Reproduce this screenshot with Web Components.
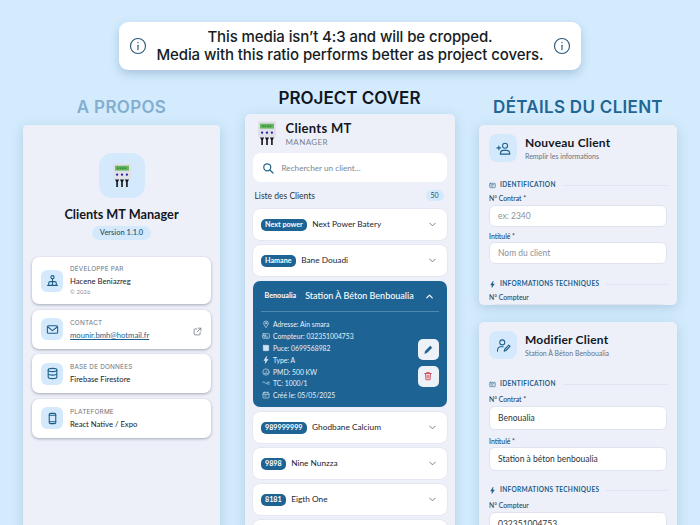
<!DOCTYPE html>
<html lang="fr">
<head>
<meta charset="utf-8">
<title>Clients MT Manager</title>
<style>
  html, body { margin: 0; padding: 0; }
  body { width: 700px; height: 525px; overflow: hidden; background: #d3ebfd; font-family: "Lato", "Liberation Sans", sans-serif; color: #15202b; font-variant-numeric: oldstyle-nums; }
</style>
</head>
<body>
<x-page>
  <x-banner slot="banner">This media isn’t 4:3 and will be cropped.<br>Media with this ratio performs better as project covers.</x-banner>

  <x-column slot="left" heading="A PROPOS" tone="#82aed0" offset="37" spacing=".3">
    <x-about-panel>
      <x-info-row icon="user" label="Développé par" value="Hacene Beniazreg" note="© 2026" h="47"></x-info-row>
      <x-info-row icon="mail" label="Contact" value="mounir.bmh@hotmail.fr" link h="39"></x-info-row>
      <x-info-row icon="db" label="Base de données" value="Firebase Firestore" h="39"></x-info-row>
      <x-info-row icon="phone" label="Plateforme" value="React Native / Expo" h="39"></x-info-row>
    </x-about-panel>
  </x-column>

  <x-column slot="center" heading="PROJECT COVER" tone="#10161f" offset="28" spacing="0">
    <x-client-list>
      <x-client-row code="Next power" name="Next Power Batery"></x-client-row>
      <x-client-row code="Hamane" name="Bane Douadi"></x-client-row>
      <x-client-open code="Benoualia" name="Station À Béton Benboualia"></x-client-open>
      <x-client-row code="989999999" name="Ghodbane Calcium"></x-client-row>
      <x-client-row code="9898" name="Nine Nunzza"></x-client-row>
      <x-client-row code="8181" name="Eigth One"></x-client-row>
      <x-client-row></x-client-row>
    </x-client-list>
  </x-column>

  <x-column slot="right" heading="DÉTAILS DU CLIENT" tone="#1f6694" offset="37" spacing=".3">
    <x-form-card icon="add" title="Nouveau Client" sub="Remplir les informations" h="180">
      <x-section-title icon="card" text="IDENTIFICATION"></x-section-title>
      <x-field label="N° Contrat *" placeholder="ex: 2340" h="22" top="4"></x-field>
      <x-field label="Intitulé *" placeholder="Nom du client" h="22" top="4"></x-field>
      <x-section-title icon="bolt" text="INFORMATIONS TECHNIQUES" top="15"></x-section-title>
      <x-field label="N° Compteur" h="22" top="4"></x-field>
    </x-form-card>
    <x-form-card icon="edit" title="Modifier Client" sub="Station À Béton Benboualia" h="230" gap="17" looser>
      <x-section-title icon="card" text="IDENTIFICATION"></x-section-title>
      <x-field label="N° Contrat *" value="Benoualia" h="24" top="6"></x-field>
      <x-field label="Intitulé *" value="Station à béton benboualia" h="24" top="7"></x-field>
      <x-section-title icon="bolt" text="INFORMATIONS TECHNIQUES" top="14"></x-section-title>
      <x-field label="N° Compteur" value="032351004753" h="24" top="6"></x-field>
    </x-form-card>
  </x-column>
</x-page>

<script>
// icon paths, all on a 24x24 box
const ICONS = {
  info: '<circle cx="12" cy="12" r="10"/><path d="M12 11v6"/><path d="M12 7.2v.3"/>',
  user: '<circle cx="12" cy="6" r="3"/><path d="M12 9v5M5 21v-4a3 3 0 0 1 3-3h8a3 3 0 0 1 3 3v4M3 21h18M12 14v7"/>',
  mail: '<rect x="2.5" y="5" width="19" height="14" rx="2"/><path d="M3 7l9 7 9-7"/>',
  db: '<ellipse cx="12" cy="5.5" rx="8" ry="3"/><path d="M4 5.5v13c0 1.7 3.6 3 8 3s8-1.300 8-3v-13M4 12c0 1.700 3.600 3 8 3s8-1.300 8-3"/>',
  phone: '<rect x="6" y="2.500" width="12" height="19" rx="2"/><path d="M6 6h12M6 18h12"/>',
  ext: '<path d="M19 14v5a2 2 0 0 1-2 2H5a2 2 0 0 1-2-2V7a2 2 0 0 1 2-2h5"/><path d="M14 3h7v7M21 3l-10 10"/>',
  search: '<circle cx="10.500" cy="10.500" r="7"/><path d="M16 16l6 6"/>',
  down: '<path d="M6 9l6 6 6-6"/>',
  up: '<path d="M6 15l6-6 6 6"/>',
  pin: '<path d="M12 22s7-6.500 7-12a7 7 0 0 0-14 0c0 5.500 7 12 7 12z"/><circle cx="12" cy="10" r="2.500"/>',
  meter: '<rect x="2" y="5" width="20" height="14" rx="2"/><path d="M6 9h6v3H6zM6 15h12"/>',
  chip: '<rect x="4" y="4" width="16" height="16" rx="1" fill="currentColor"/>',
  bolt: '<path d="M13.500 2L6 13.500h5L10 22l8-12h-5.500z" fill="currentColor"/>',
  gauge: '<circle cx="12" cy="12" r="9.500"/><path d="M12 12l3-4M7 16h10"/>',
  wave: '<path d="M2 11c2-4 5-4 7 0s5 4 6 1M16 10h6M16 15h6"/>',
  cal: '<rect x="3" y="5" width="18" height="16" rx="2"/><path d="M3 10h18M8 2.500V6M16 2.500V6M8 15h5"/>',
  pen: '<path d="M4 20l1-4.500L16 4.500l3.500 3.500L8.500 19z" fill="currentColor"/>',
  trash: '<path d="M4 6h16M9 6V3.500h6V6M6 6l1 15h10l1-15M10 10v7M14 10v7"/>',
  add: '<circle cx="14.500" cy="7.500" r="4"/><path d="M7 21v-1.500a5 5 0 0 1 5-4.500h5a5 5 0 0 1 5 4.500V21zM1.500 11h6M4.500 8v6"/>',
  edit: '<circle cx="10" cy="7" r="4"/><path d="M2.500 21v-2a5 5 0 0 1 5-5h4M13 21l1-3 6.500-6.500 2 2L16 20z"/>',
  card: '<rect x="2.500" y="4.500" width="19" height="15" rx="2"/><path d="M6.500 9.500h11M6.500 14h7"/>'
};

function icon(name, size, width) {
  return `<svg width="${size}" height="${size}" viewBox="0 0 24 24" fill="none" stroke="currentColor" stroke-width="${width || 2}" stroke-linecap="round" stroke-linejoin="round" aria-hidden="true">${ICONS[name]}</svg>`;
}

// base class: every element fills its own open shadow root once
class ShadowEl extends HTMLElement {
  constructor() {
    super();
    this.attachShadow({ mode: 'open' });
  }
  connectedCallback() {
    this.shadowRoot.innerHTML = this.render();
  }
  attr(name, fallback) {
    return this.hasAttribute(name) ? this.getAttribute(name) : fallback;
  }
}

class XPage extends ShadowEl {
  render() {
    return `<style>
      :host { display: block; width: 700px; height: 525px; overflow: hidden; }
      .top { display: flex; justify-content: center; padding-top: 22px; }
      .cols { display: grid; grid-template-columns: 197px 210px 198px; column-gap: 24.500px; padding-left: 23px; }
    </style>
    <div class="top"><slot name="banner"></slot></div>
    <div class="cols"><slot name="left"></slot><slot name="center"></slot><slot name="right"></slot></div>`;
  }
}

class XBanner extends ShadowEl {
  render() {
    return `<style>
      :host { display: flex; align-items: center; justify-content: space-between; box-sizing: border-box; width: 462px; height: 48px; padding: 0 10px; background: #fff; border-radius: 9px; box-shadow: 0 4px 10px rgba(60,100,140,.28); font-variant-numeric: lining-nums; }
      p { margin: 0; font: 500 15px/18px "Inter", sans-serif; letter-spacing: -.1px; color: #161c24; text-align: center; white-space: nowrap; }
      svg { color: #2a5878; display: block; flex: none; }
    </style>
    ${icon('info', 18, 1.5)}<p><slot></slot></p>${icon('info', 18, 1.5)}`;
  }
}

class XColumn extends ShadowEl {
  render() {
    return `<style>
      :host { display: block; min-width: 0; }
      h2 { margin: 0; height: 19px; font: 600 17px/19px "Inter", sans-serif; letter-spacing: ${this.attr('spacing', 0)}px; text-align: center; white-space: nowrap; color: ${this.attr('tone')}; }
      .body { display: flex; flex-direction: column; }
    </style>
    <h2 style="margin-top:${this.attr('offset')-9}px;margin-bottom:${this.attr('offset') === '28' ? 6 : 8}px">${this.attr('heading')}</h2>
    <div class="body"><slot></slot></div>`;
  }
}

// the little meter drawn as the app logo
class XMeterLogo extends ShadowEl {
  render() {
    return `<style>:host { display: block; line-height: 0; } svg { display: block; }</style>
    <svg width="${this.attr('w', 22)}" height="${this.attr('h', 30)}" viewBox="0 0 22 30">
      <rect x="0" y="0" width="22" height="20" rx="1.500" fill="#dfe0e8"/>
      <rect x="2.500" y="3" width="17" height="6" fill="#63b85c"/>
      <path d="M5 6h12" stroke="#2f7a35" stroke-width="1.500" stroke-dasharray="2 1"/>
      <circle cx="5" cy="14" r="1.400" fill="#2a20a8"/><circle cx="11" cy="14" r="1.400" fill="#2a20a8"/><circle cx="17" cy="14" r="1.400" fill="#2a20a8"/>
      <g fill="#15161a"><path d="M2.500 20h5l-1.500 3v6H4v-6zM8.500 20h5l-1.500 3v6h-2v-6zM14.500 20h5l-1.500 3v6h-2v-6z"/></g>
    </svg>`;
  }
}

class XAboutPanel extends ShadowEl {
  render() {
    return `<style>
      :host { display: flex; flex-direction: column; align-items: center; box-sizing: border-box; height: 420px; padding-top: 28px; background: #eef0f9; border-radius: 4px 4px 0 0; box-shadow: 0 3px 12px rgba(70,110,150,.25); }
      .tile { width: 46px; height: 45px; border-radius: 13px; background: #d4eafc; display: flex; align-items: center; justify-content: center; }
      h3 { margin: 8px 0 0; font: 700 12.700px/17px "Lato", sans-serif; color: #12171f; }
      .ver { margin-top: 3px; height: 14px; padding: 0 8px; border-radius: 7px; background: #d4eafc; font: 500 7.500px/14px "Lato", sans-serif; color: #1d4f70; }
      .rows { align-self: stretch; margin-top: 17px; padding: 0 9px; display: flex; flex-direction: column; gap: 5.500px; }
    </style>
    <div class="tile"><x-meter-logo w="18" h="25"></x-meter-logo></div>
    <h3>Clients MT Manager</h3>
    <div class="ver">Version 1.1.0</div>
    <div class="rows"><slot></slot></div>`;
  }
}

class XInfoRow extends ShadowEl {
  render() {
    const link = this.hasAttribute('link');
    const note = this.attr('note');
    return `<style>
      :host { display: flex; align-items: center; box-sizing: border-box; height: ${this.attr('h')}px; padding: 0 9px; gap: 7px; background: #fff; border-radius: 7px; box-shadow: 0 1px 3px rgba(50,60,80,.4); }
      .tile { flex: none; width: 22px; height: 22px; border-radius: 6px; background: #d4eafc; color: #1d5f8a; display: flex; align-items: center; justify-content: center; }
      .txt { flex: 1; min-width: 0; }
      .lab { font: 400 6.400px/9px "Inter", sans-serif; letter-spacing: .2px; text-transform: uppercase; color: #6c7480; }
      .val { margin-top: 2px; font: 400 7.700px/10px "Lato", sans-serif; color: ${link ? '#1d5f8a' : '#15202b'}; text-decoration: ${link ? 'underline' : 'none'}; }
      .note { margin-top: 2px; font: 400 6px/8px "Lato", sans-serif; color: #8a929c; }
      .ext { color: #6c7480; display: block; }
    </style>
    <div class="tile">${icon(this.attr('icon'), 13, 2)}</div>
    <div class="txt">
      <div class="lab">${this.attr('label')}</div>
      <div class="val">${this.attr('value')}</div>
      ${note ? `<div class="note">${note}</div>` : ''}
    </div>
    ${link ? `<span class="ext">${icon('ext', 9, 2)}</span>` : ''}`;
  }
}

class XClientList extends ShadowEl {
  render() {
    return `<style>
      :host { display: block; box-sizing: border-box; height: 420px; padding: 7px 8px 0; background: #eef0f9; border-radius: 5px 5px 0 0; box-shadow: 0 3px 12px rgba(70,110,150,.25); overflow: hidden; }
      .brand { display: flex; align-items: center; gap: 10px; height: 25px; padding-left: 5px; }
      .name { font: 700 13px/15px "Lato", sans-serif; color: #12171f; letter-spacing: .3px; }
      .sub { margin-top: 2px; font: 400 8px/9px "Lato", sans-serif; letter-spacing: .4px; color: #7a828e; }
      .search { margin-top: 7px; height: 29px; display: flex; align-items: center; gap: 8px; padding-left: 9px; background: #fff; border-radius: 8px; font: 400 8.200px/10px "Lato", sans-serif; color: #7d8590; }
      .search svg { color: #2a668f; }
      .head { display: flex; align-items: center; justify-content: space-between; height: 27px; padding: 0 3px 0 2px; font: 400 8.500px/10px "Lato", sans-serif; color: #2a3440; }
      .count { width: 18px; height: 11px; border-radius: 6px; background: #d4eafc; color: #1d4f70; font-size: 7px; line-height: 11px; text-align: center; }
      .items { display: flex; flex-direction: column; gap: 5px; }
    </style>
    <div class="brand"><x-meter-logo w="18" h="25"></x-meter-logo><div><div class="name">Clients MT</div><div class="sub">MANAGER</div></div></div>
    <div class="search">${icon('search', 12, 2.500)}<span>Rechercher un client...</span></div>
    <div class="head"><span>Liste des Clients</span><span class="count">50</span></div>
    <div class="items"><slot></slot></div>`;
  }
}

class XClientRow extends ShadowEl {
  render() {
    const code = this.attr('code');
    return `<style>
      :host { display: flex; align-items: center; box-sizing: border-box; height: 31px; padding: 0 9px 0 8px; gap: 5px; background: #fff; border-radius: 7px; box-shadow: 0 0 0 .5px #dde0ea; }
      .code { flex: none; height: 12px; padding: 0 4.500px; border-radius: 5px; background: #1d6495; color: #fff; font: 700 7.200px/12px "Lato", sans-serif; }
      .name { flex: 1; font: 400 8.300px/11px "Lato", sans-serif; color: #1c2530; }
      svg { color: #6c7480; display: block; margin-left: auto; }
    </style>
    ${code ? `<span class="code">${code}</span><span class="name">${this.attr('name')}</span>` : ''}${icon('down', 11, 2)}`;
  }
}

class XClientOpen extends ShadowEl {
  render() {
    const lines = [
      ['pin', 'Adresse: Ain smara'], ['meter', 'Compteur: 032351004753'], ['chip', 'Puce: 0699568982'],
      ['bolt', 'Type: A'], ['gauge', 'PMD: 500 KW'], ['wave', 'TC: 1000/1'], ['cal', 'Créé le: 05/05/2025']
    ];
    return `<style>
      :host { display: block; box-sizing: border-box; height: 126px; padding: 0 8px; background: #1d6495; border-radius: 7px; color: #e6f0f8; }
      .top { display: flex; align-items: center; height: 30px; border-bottom: 1px solid #4f89b0; gap: 9px; padding: 0 4px; }
      .code { font: 700 7.200px/10px "Lato", sans-serif; color: #fff; white-space: nowrap; }
      .name { flex: 1; font: 500 9px/12px "Lato", sans-serif; color: #fff; white-space: nowrap; }
      .top svg { color: #fff; display: block; flex: none; }
      .bot { display: flex; justify-content: space-between; align-items: center; padding-top: 6.500px; }
      .lines { display: flex; flex-direction: column; }
      .ln { display: flex; align-items: center; gap: 3.500px; height: 11.800px; padding-left: 1px; font: 400 6.800px/10px "Lato", sans-serif; }
      .ln svg { display: block; color: #cfe2ef; }
      .acts { display: flex; flex-direction: column; gap: 6px; margin-top: 6px; }
      .btn { width: 21px; height: 21px; border-radius: 5px; background: #edf1f8; display: flex; align-items: center; justify-content: center; }
      .pen { color: #1d5f8a; } .bin { color: #c8404c; }
    </style>
    <div class="top"><span class="code">${this.attr('code')}</span><span class="name">${this.attr('name')}</span>${icon('up', 11, 2.500)}</div>
    <div class="bot">
      <div class="lines">${lines.map(l => `<div class="ln">${icon(l[0], 8, 2)}<span>${l[1]}</span></div>`).join('')}</div>
      <div class="acts"><div class="btn pen">${icon('pen', 11, 1)}</div><div class="btn bin">${icon('trash', 10, 2)}</div></div>
    </div>`;
  }
}

class XFormCard extends ShadowEl {
  render() {
    const looser = this.hasAttribute('looser');
    return `<style>
      :host { display: block; box-sizing: border-box; height: ${this.attr('h')}px; margin-top: ${this.attr('gap', 0)}px; padding: 9px 10px 0; background: #eef0f9; border-radius: 5px; box-shadow: 0 3px 12px rgba(70,110,150,.25); overflow: hidden; }
      .head { display: flex; align-items: center; gap: 8px; margin-bottom: ${looser ? 20 : 18}px; }
      .tile { width: 28px; height: 28px; border-radius: 8px; background: #d4eafc; color: #1d5f8a; display: flex; align-items: center; justify-content: center; }
      h3 { margin: 0; font: 700 12px/14px "Lato", sans-serif; letter-spacing: .2px; color: #12171f; }
      .sub { margin-top: 2px; font: 400 7px/9px "Lato", sans-serif; color: #68707c; }
    </style>
    <div class="head"><div class="tile">${icon(this.attr('icon'), 15, 1.700)}</div><div><h3>${this.attr('title')}</h3><div class="sub">${this.attr('sub')}</div></div></div>
    <slot></slot>`;
  }
}

class XSectionTitle extends ShadowEl {
  render() {
    return `<style>
      :host { display: flex; align-items: center; gap: 4px; height: 10px; margin-top: ${this.attr('top', 0)}px; color: #1d5f8a; }
      svg { display: block; flex: none; }
      span { font: 700 6.500px/10px "Lato", sans-serif; letter-spacing: .3px; white-space: nowrap; }
      i { flex: 1; height: 1px; margin-left: 3px; background: #dfe4ef; }
    </style>
    ${icon(this.attr('icon'), 7, 2)}<span>${this.attr('text')}</span><i></i>`;
  }
}

class XField extends ShadowEl {
  render() {
    const value = this.attr('value');
    return `<style>
      :host { display: block; margin-top: ${this.attr('top', 3)}px; }
      label { display: block; font: 500 6.800px/9px "Lato", sans-serif; color: #1d4060; }
      .inp { box-sizing: border-box; height: ${this.attr('h')}px; margin-top: 1.500px; margin-bottom: 5px; padding: 0 8px; background: #fff; border: 1px solid #dfe3ee; border-radius: 6px; font: 400 8.500px/${this.attr('h') - 2}px "Lato", sans-serif; color: ${value ? '#2a3440' : '#8a929c'}; }
    </style>
    <label>${this.attr('label')}</label>
    <div class="inp">${value || this.attr('placeholder', '')}</div>`;
  }
}

customElements.define('x-page', XPage);
customElements.define('x-banner', XBanner);
customElements.define('x-column', XColumn);
customElements.define('x-meter-logo', XMeterLogo);
customElements.define('x-about-panel', XAboutPanel);
customElements.define('x-info-row', XInfoRow);
customElements.define('x-client-list', XClientList);
customElements.define('x-client-row', XClientRow);
customElements.define('x-client-open', XClientOpen);
customElements.define('x-form-card', XFormCard);
customElements.define('x-section-title', XSectionTitle);
customElements.define('x-field', XField);
</script>
</body>
</html>
